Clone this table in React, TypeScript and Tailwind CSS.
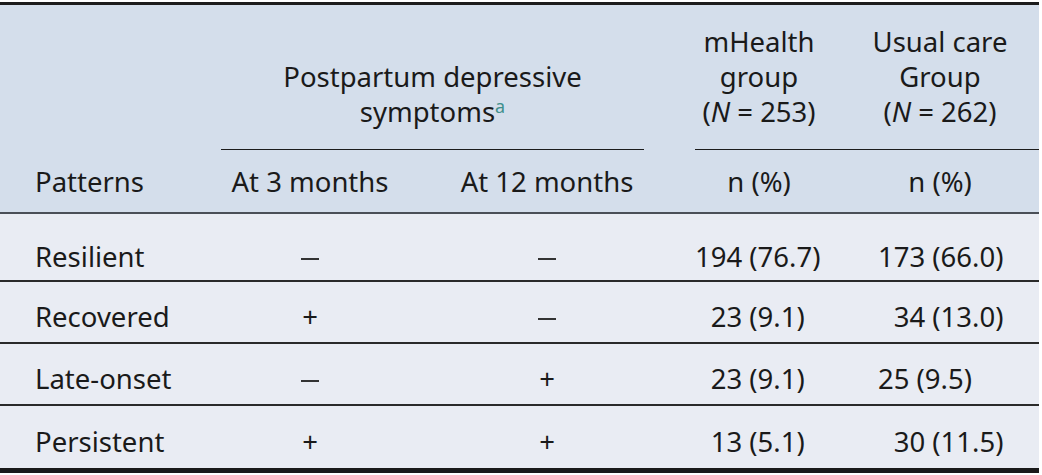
import React from "react";

const FIG = "\u2007";

interface BodyRow {
	pattern: string;
	at3: string;
	at12: string;
	mhealth: string;
	usual: string;
}

const rows: BodyRow[] = [
	{ pattern: "Resilient", at3: "–", at12: "–", mhealth: "194 (76.7)", usual: "173 (66.0)" },
	{ pattern: "Recovered", at3: "+", at12: "–", mhealth: `${FIG}23 (9.1)`, usual: `${FIG}34 (13.0)` },
	{ pattern: "Late-onset", at3: "–", at12: "+", mhealth: `${FIG}23 (9.1)`, usual: "25 (9.5)" },
	{ pattern: "Persistent", at3: "+", at12: "+", mhealth: `${FIG}13 (5.1)`, usual: `${FIG}30 (11.5)` },
];

const Sign: React.FC<{ value: string }> = ({ value }) =>
	value === "+" ? (
		<span>+</span>
	) : (
		<span className="inline-block align-middle w-[18px] h-[1.5px] bg-[#333]"></span>
	);

const App: React.FC = () => {
	return (
		<div className="w-[1042px] h-[475px] bg-white pt-[2px] font-['Noto_Sans',sans-serif] text-[27.5px] leading-[35px] text-[#1a1a1a]">
			<div className="w-[1039px] border-t-[3px] border-[#1c1c1c]">
				{/* Header */}
				<div className="bg-[#d4deeb] border-b-2 border-[#4a4f57]">
					<div className="grid grid-cols-[221px_178px_296px_128px_216px] h-[145px]">
						<div></div>
						<div className="col-span-2 mr-[51px] border-b-[1.5px] border-[#1c1c1c] flex items-end justify-center pb-[20px] text-center">
							<div>
								Postpartum depressive
								<br />
								symptoms
								<span className="relative -top-[9px] text-[18px] text-[#3f8f8c] leading-none">a</span>
							</div>
						</div>
						<div className="col-span-2 border-b-[1.5px] border-[#1c1c1c] grid grid-cols-[128px_216px]">
							<div className="flex items-end justify-center pb-[20px] text-center">
								<div>
									mHealth
									<br />
									group
									<br />
									(<i>N</i> = 253)
								</div>
							</div>
							<div className="flex items-end justify-center pb-[20px] pl-[18px] text-center">
								<div>
									Usual care
									<br />
									Group
									<br />
									(<i>N</i> = 262)
								</div>
							</div>
						</div>
					</div>
					<div className="grid grid-cols-[221px_178px_296px_128px_216px] h-[62px] items-center">
						<div className="pl-[35px]">Patterns</div>
						<div className="text-center">At 3 months</div>
						<div className="text-center">At 12 months</div>
						<div className="text-center">n (%)</div>
						<div className="text-center pl-[18px]">n (%)</div>
					</div>
				</div>

				{/* Body */}
				<div className="bg-[#e9ecf3] border-b-[5px] border-[#1a1a1a]">
					{rows.map((row, index) => (
						<div
							key={row.pattern}
							className={`grid grid-cols-[221px_178px_296px_128px_216px] items-center ${
								index === 0 ? "h-[68px] pt-[18px]" : "h-[62px] pt-[8px]"
							} ${index < rows.length - 1 ? "border-b-2 border-[#2a2a2a]" : ""}`}
						>
							<div className="pl-[35px]">{row.pattern}</div>
							<div className="text-center">
								<Sign value={row.at3} />
							</div>
							<div className="text-center">
								<Sign value={row.at12} />
							</div>
							<div className="whitespace-pre">{row.mhealth}</div>
							<div className="whitespace-pre pl-[55px]">{row.usual}</div>
						</div>
					))}
				</div>
			</div>
		</div>
	);
};

export default App;
